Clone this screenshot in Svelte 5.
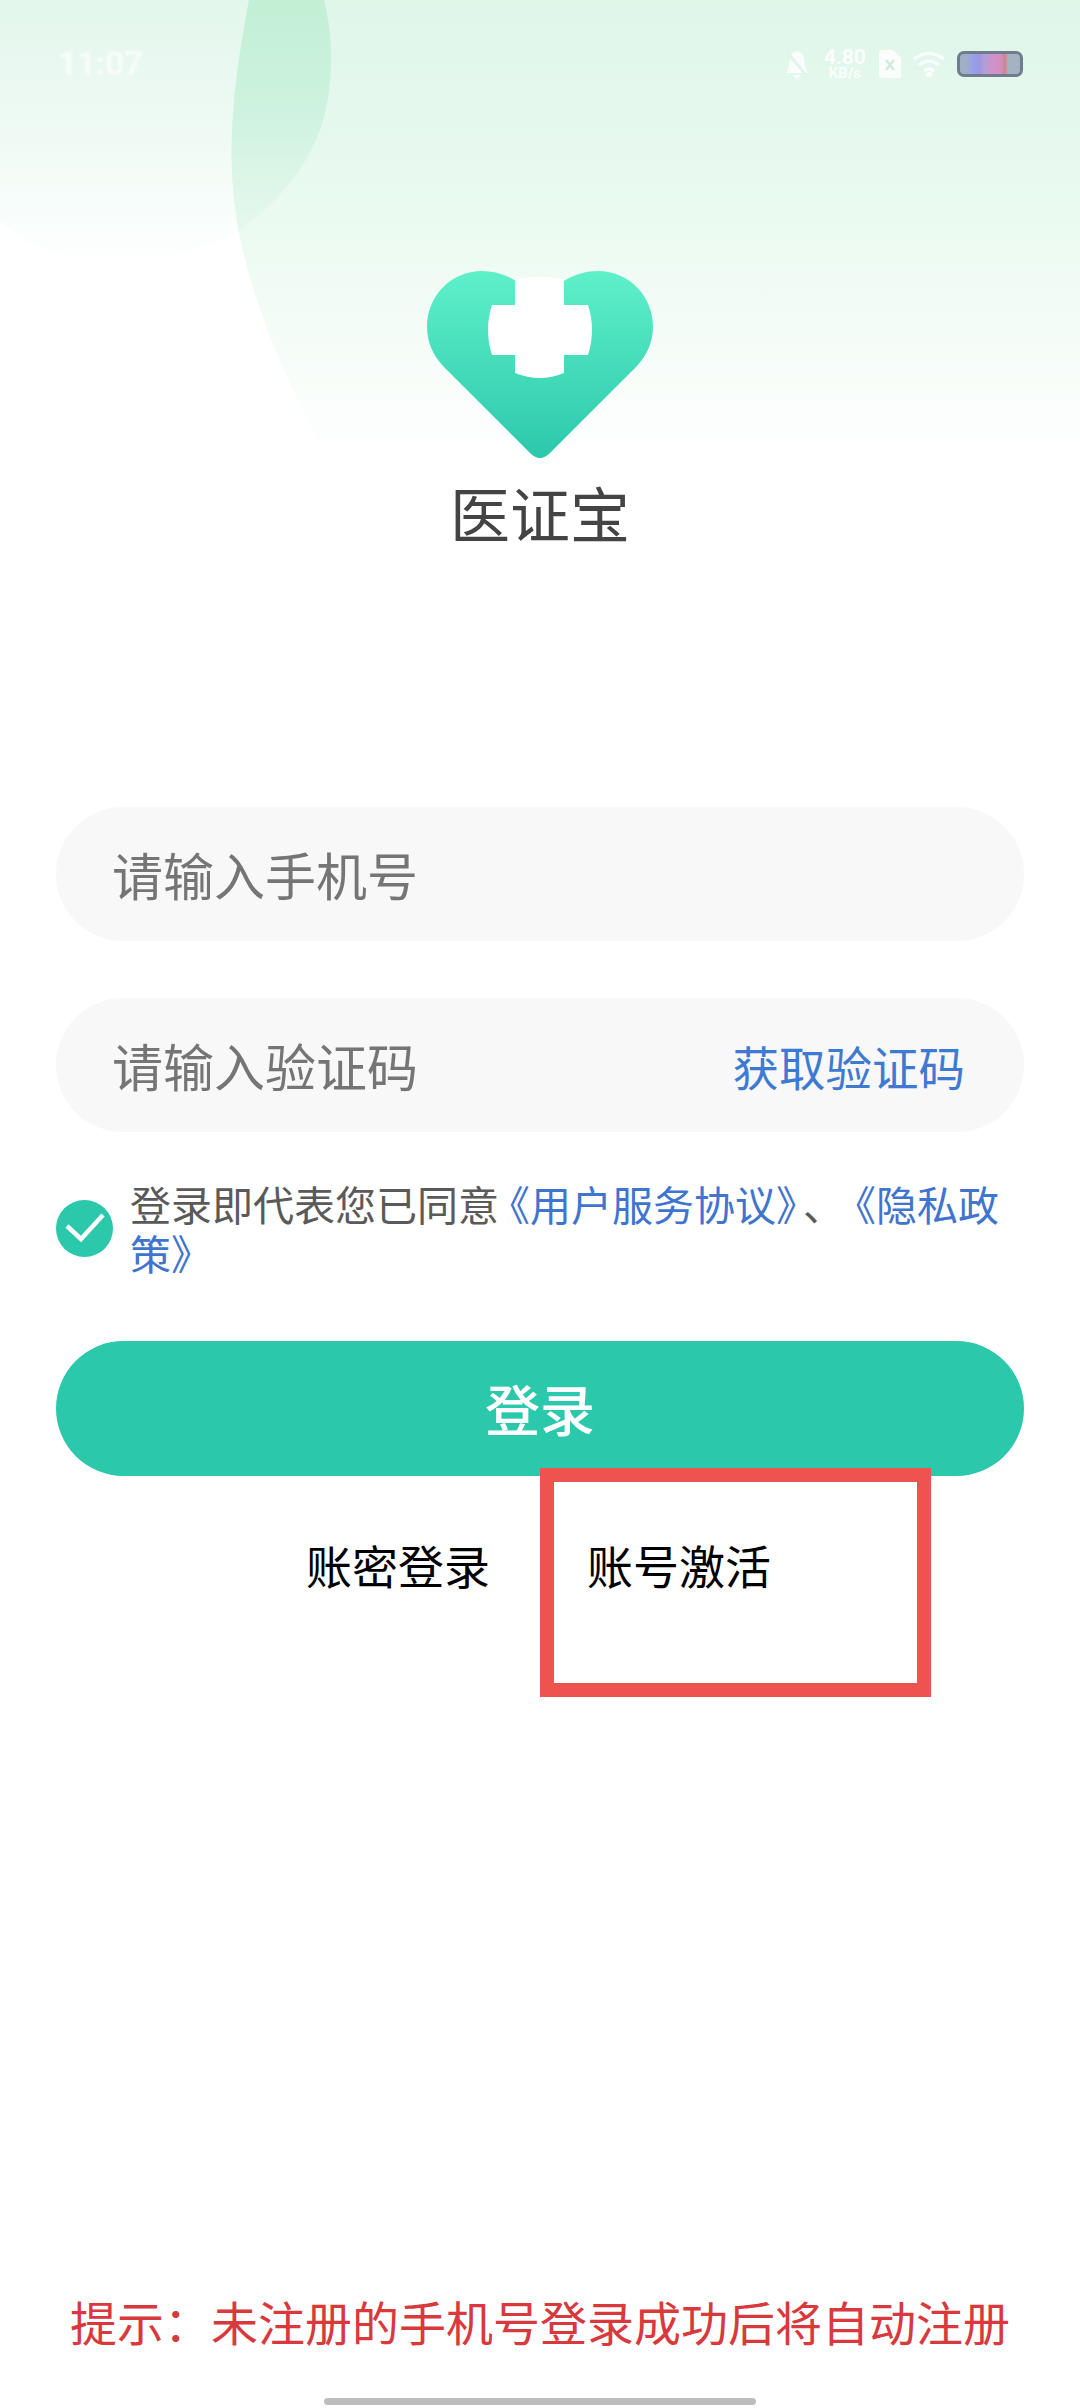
<script>
	let agreed = $state(true);

	const hint = "提示\uFF1A未注册的手机号登录成功后将自动注册";
	const mainShape = "M249 0 C232 90 222 170 245 260 C265 335 290 385 320 445 L340 460 L1080 460 L1080 0 Z";
	const leftBlob = "M0 0 L324 0 C334 40 334 90 320 130 C305 170 275 205 240 230 C190 258 130 270 70 258 C40 252 20 238 0 222 Z";
</script>

<div class="page">
	<svg class="backdrop" width="1080" height="480" viewBox="0 0 1080 480" aria-hidden="true">
		<defs>
			<linearGradient id="wash" gradientUnits="userSpaceOnUse" x1="0" y1="0" x2="0" y2="460">
				<stop offset="0" stop-color="#dff6e9" />
				<stop offset="0.45" stop-color="#eafaf0" />
				<stop offset="0.7" stop-color="#f3fcf7" />
				<stop offset="1" stop-color="#ffffff" />
			</linearGradient>
			<linearGradient id="blob" gradientUnits="userSpaceOnUse" x1="0" y1="0" x2="0" y2="270">
				<stop offset="0" stop-color="#e3f7ec" />
				<stop offset="0.4" stop-color="#edf9f3" />
				<stop offset="0.75" stop-color="#f7fdfa" />
				<stop offset="1" stop-color="#ffffff" />
			</linearGradient>
			<linearGradient id="overlap" gradientUnits="userSpaceOnUse" x1="0" y1="0" x2="0" y2="230">
				<stop offset="0" stop-color="#c2efd5" />
				<stop offset="0.45" stop-color="#cdf2de" />
				<stop offset="1" stop-color="#e6f8ee" />
			</linearGradient>
			<clipPath id="main-clip"><path d={mainShape} /></clipPath>
		</defs>
		<path d={leftBlob} fill="url(#blob)" />
		<path d={mainShape} fill="url(#wash)" />
		<path d={leftBlob} fill="url(#overlap)" clip-path="url(#main-clip)" />
	</svg>

	<header class="status">
		<span class="clock">11:07</span>
		<div class="status-icons">
			<svg width="24" height="30" viewBox="0 0 24 30" fill="#fff">
				<path d="M3 21 L5 10 Q6 3 12 2 Q18 3 19 10 L21 21 L23 24 L1 24 Z" />
				<path d="M8 26 H16 L12 30 Z" />
				<path d="M1 2 L22 27" stroke="#e1f6ea" stroke-width="3" />
			</svg>
			<div class="speed"><span>4.80</span><small>KB/s</small></div>
			<svg width="22" height="28" viewBox="0 0 22 28">
				<path d="M3 0 H14 L22 8 V25 Q22 28 19 28 H3 Q0 28 0 25 V3 Q0 0 3 0 Z" fill="#fff" />
				<path d="M7 10 L15 20 M15 10 L7 20" stroke="#cfe9da" stroke-width="2.5" />
			</svg>
			<svg class="wifi" width="32" height="26" viewBox="0 0 32 26" fill="none" stroke="#fff" stroke-width="3">
				<path d="M1 8 Q16 -3 31 8" />
				<path d="M6 14 Q16 6 26 14" />
				<path d="M11 20 Q16 16 21 20" />
				<circle cx="16" cy="24" r="1.5" fill="#fff" />
			</svg>
			<div class="battery"></div>
		</div>
	</header>

	<section class="brand">
		<svg width="226" height="188" viewBox="427 271 226 188" aria-label="医证宝">
			<defs>
				<linearGradient id="heart" x1="0" y1="0" x2="0" y2="1">
					<stop offset="0" stop-color="#5ff0c9" />
					<stop offset="1" stop-color="#2cc8ac" />
				</linearGradient>
			</defs>
			<path
				d="M516 281 C505 274 493 271 482 271 C451 271 427 296 427 327 C427 342 433 355 443 366 L530 453 Q540 463 550 453 L637 366 C647 355 653 342 653 327 C653 296 629 271 598 271 C587 271 575 274 564 281 Z"
				fill="url(#heart)"
			/>
			<path
				d="M515 279 Q540 274 564 279 V305 H588 Q596 330 588 355 H564 V373 Q540 383 515 373 V355 H492 Q484 330 492 305 H515 Z"
				fill="#fff"
			/>
		</svg>
		<h1>医证宝</h1>
	</section>

	<form class="form">
		<div class="field"><span class="placeholder">请输入手机号</span></div>
		<div class="field">
			<span class="placeholder">请输入验证码</span>
			<span class="code">获取验证码</span>
		</div>

		<div class="agree">
			<button type="button" class="check" aria-label="同意" onclick={() => (agreed = !agreed)}>
				<svg width="57" height="57" viewBox="0 0 57 57">
					<circle cx="28.5" cy="28.5" r="28.5" fill="#2cc8ac" />
					{#if agreed}
						<path d="M11 26 L25 39 L47 15" fill="none" stroke="#fff" stroke-width="4.5" />
					{/if}
				</svg>
			</button>
			<p>
				登录即代表您已同<span class="tight-a">意</span><a href="#terms">《用户服务协议<span class="tight-b">》</span></a><span class="tight-c">、</span><a href="#privacy">《隐私政</a><a href="#privacy">策》</a>
			</p>
		</div>

		<button type="button" class="submit">登录</button>

		<div class="links">
			<span>账密登录</span>
			<span>账号激活</span>
		</div>
	</form>

	<div class="highlight"></div>

	<p class="hint">{hint}</p>
	<div class="home-bar"></div>
</div>

<style>
	:global(body) {
		background: #fff;
	}

	.page {
		position: relative;
		width: 1080px;
		height: 2408px;
		overflow: hidden;
		display: flex;
		flex-direction: column;
		background: #fff;
		font-family: "Noto Sans CJK SC", "Noto Sans", sans-serif;
	}

	.backdrop {
		position: absolute;
		top: 0;
		left: 0;
	}

	.status {
		position: relative;
		height: 126px;
		padding: 44px 57px 0 58px;
		box-sizing: border-box;
		display: flex;
		justify-content: space-between;
		align-items: flex-start;
		color: #fff;
		opacity: 0.85;
	}

	.clock {
		font-family: Roboto, sans-serif;
		font-size: 33px;
		font-weight: 700;
		line-height: 40px;
		opacity: 0.8;
		filter: blur(0.8px);
	}

	.status-icons {
		display: flex;
		align-items: center;
		gap: 11px;
		height: 36px;
		padding-top: 2px;
		filter: blur(0.7px);
	}

	.speed {
		display: flex;
		flex-direction: column;
		align-items: center;
		width: 46px;
		margin-left: 2px;
		font-family: Roboto, sans-serif;
		font-weight: 700;
	}

	.speed span {
		font-size: 21px;
		line-height: 18px;
	}

	.speed small {
		font-size: 15px;
		line-height: 15px;
	}

	.wifi {
		margin-left: 1px;
	}

	.battery {
		width: 66px;
		height: 26px;
		box-sizing: border-box;
		border: 3px solid #5d677c;
		border-radius: 7px;
		background: linear-gradient(
			90deg,
			#96a3bb 0 10%,
			#8c8ff0 22%,
			#8f86e0 32%,
			#a78fd8 40%,
			#d080c4 56%,
			#cf7fb4 68%,
			#d86a80 75%,
			#9aa6bc 80%
		);
		margin-left: 1px;
	}

	.brand {
		position: relative;
		height: 681px;
		display: flex;
		flex-direction: column;
		align-items: center;
		padding-top: 145px;
		box-sizing: border-box;
	}

	.brand svg {
		display: block;
	}

	.brand h1 {
		margin: 17px 0 0;
		font-size: 60px;
		line-height: 72px;
		font-weight: 400;
		color: #444;
	}

	.form {
		position: relative;
		margin: 0;
		padding: 0 56px;
		display: flex;
		flex-direction: column;
	}

	.field {
		height: 134px;
		margin-bottom: 57px;
		padding: 0 59px 0 56px;
		display: flex;
		align-items: center;
		justify-content: space-between;
		background: #f8f8f8;
		border-radius: 67px;
	}

	.field + .field {
		margin-bottom: 0;
	}

	.placeholder {
		font-size: 51px;
		color: #757575;
	}

	.code {
		font-size: 46.5px;
		color: #3f7ad2;
	}

	.agree {
		margin-top: 47px;
		display: flex;
		align-items: center;
		gap: 17px;
	}

	.check {
		flex: none;
		width: 57px;
		height: 57px;
		padding: 0;
		border: 0;
		background: none;
	}

	.check svg {
		display: block;
	}

	.agree p {
		margin: 0;
		font-size: 41px;
		line-height: 49px;
		color: #5a5a5a;
		text-spacing-trim: space-all;
	}

	.agree a {
		color: #3f74cf;
		text-decoration: none;
	}

	/* the original's brackets sit closer than a full CJK cell */
	.tight-a {
		letter-spacing: -10px;
	}

	.tight-b {
		letter-spacing: -14px;
	}

	.tight-c {
		letter-spacing: -9px;
		color: #5a5a5a;
	}

	.submit {
		height: 135px;
		margin-top: 64px;
		padding: 0 0 3px;
		border: 0;
		border-radius: 68px;
		background: #2cc8ac;
		color: #fff;
		font-family: inherit;
		font-size: 55px;
		font-weight: 500;
	}

	.links {
		padding: 58px 0 0 250px;
		display: flex;
		gap: 97px;
		font-size: 46px;
		line-height: 60px;
		color: #000;
	}

	.highlight {
		position: absolute;
		left: 540px;
		top: 1468px;
		width: 391px;
		height: 229px;
		box-sizing: border-box;
		border: 14px solid #ef5350;
	}

	.hint {
		position: absolute;
		left: 0;
		right: 0;
		top: 2289px;
		margin: 0;
		text-align: center;
		font-size: 47px;
		line-height: 64px;
		color: #d8393d;
		text-spacing-trim: space-all;
	}

	.home-bar {
		position: absolute;
		left: 324px;
		top: 2398px;
		width: 432px;
		height: 7px;
		border-radius: 4px;
		background: #bdbdbd;
	}
</style>
